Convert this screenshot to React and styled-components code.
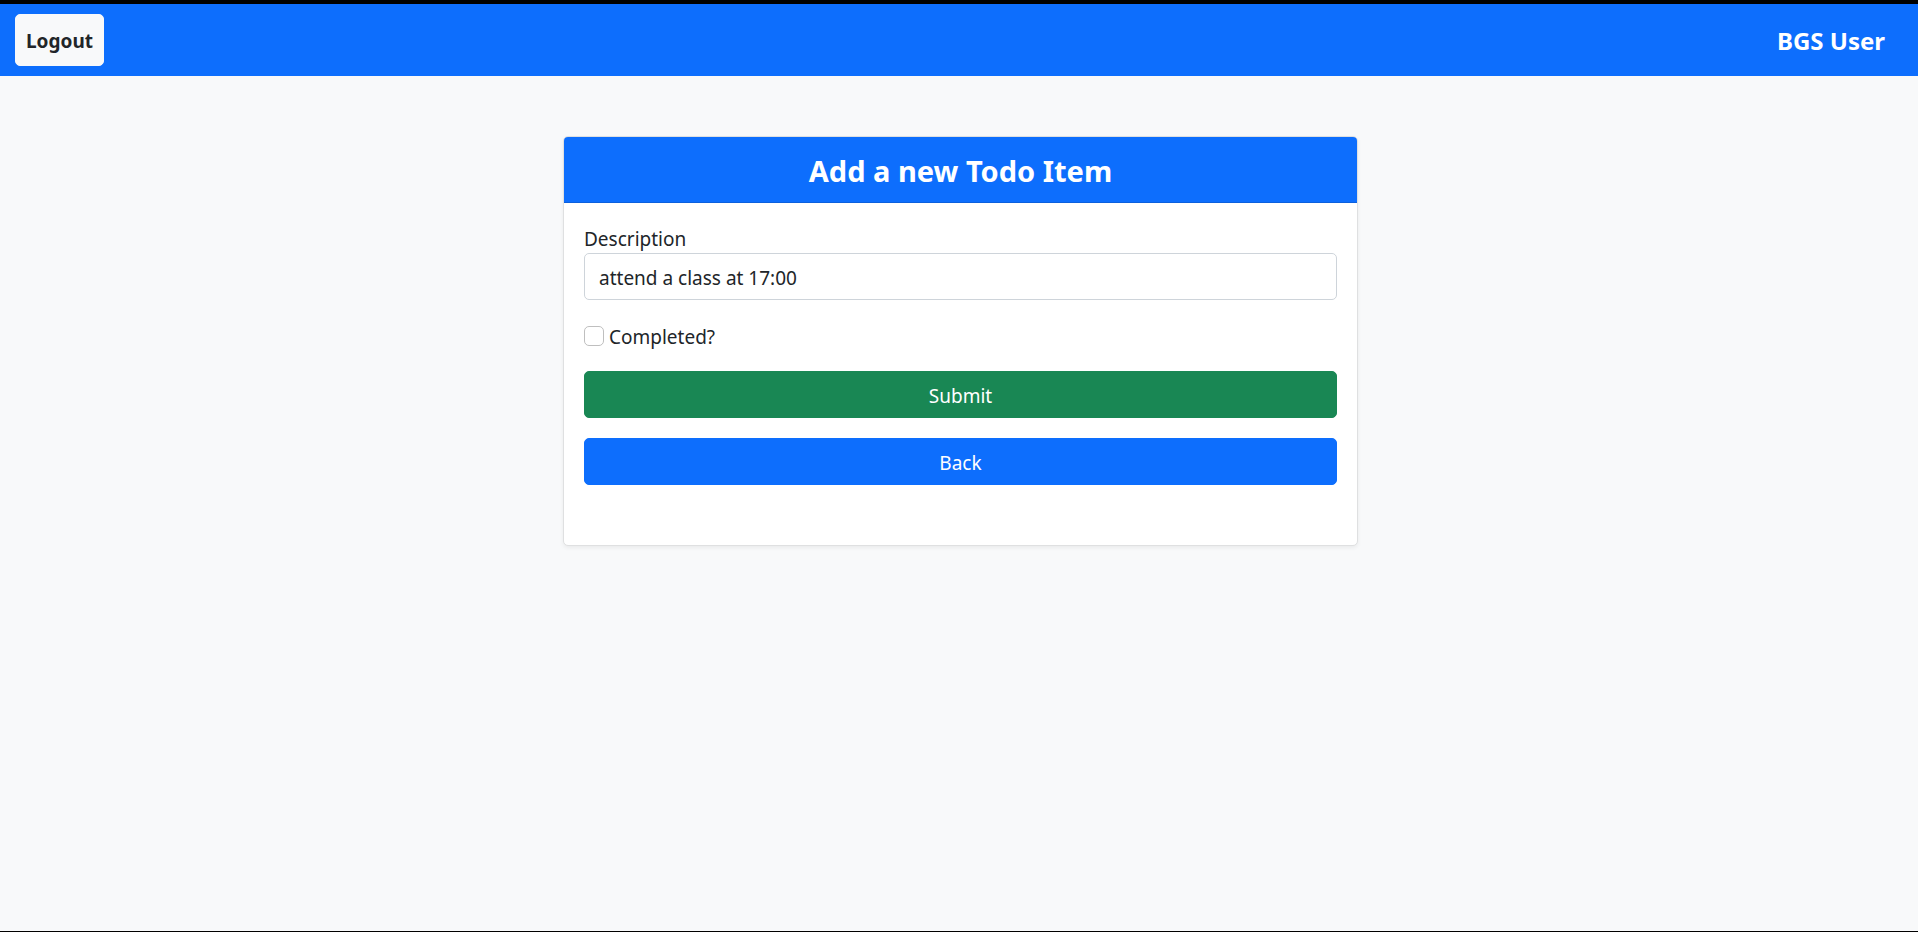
import React, { useState } from 'react';
import styled, { createGlobalStyle } from 'styled-components';

const GlobalStyle = createGlobalStyle`
  *, *::before, *::after { box-sizing: border-box; }
  body {
    margin: 0;
    background: #f8f9fa;
    color: #212529;
    font-family: "Segoe UI", "Noto Sans", "Liberation Sans", sans-serif;
    font-size: 19px;
    line-height: 30px;
  }
`;

const Page = styled.div`
  display: flex;
  flex-direction: column;
  min-height: 100vh;
  border-top: 4px solid #000;
  border-bottom: 1px solid #000;
`;

const Navbar = styled.header`
  display: flex;
  align-items: center;
  justify-content: space-between;
  padding: 10px 33px 10px 15px;
  background: #0d6efd;
`;

const LogoutButton = styled.button`
  padding: 12px 10px 10px;
  border: 1px solid #f8f9fa;
  border-radius: 5px;
  background: #f8f9fa;
  color: #212529;
  font: inherit;
  font-weight: 700;
  line-height: 28px;
  cursor: pointer;
`;

const UserName = styled.span`
  padding-top: 2px;
  color: #fff;
  font-size: 24px;
  font-weight: 700;
`;

const Main = styled.main`
  display: flex;
  justify-content: center;
  padding: 60px 12px 60px 15px;
`;

const Card = styled.section`
  width: 100%;
  max-width: 795px;
  border: 1px solid #dfe0e1;
  border-radius: 5px;
  background: #fff;
  box-shadow: 0 2px 4px rgba(0, 0, 0, 0.06);
  overflow: hidden;
`;

const CardTitle = styled.h1`
  margin: 0;
  padding: 14px 20px 11px;
  border-bottom: 1px solid #0c60dd;
  background: #0d6efd;
  color: #fff;
  font-size: 29px;
  font-weight: 700;
  line-height: 40px;
  text-align: center;
`;

const Form = styled.form`
  display: flex;
  flex-direction: column;
  gap: 20px;
  padding: 20px 20px 60px;
`;

const Field = styled.div`
  display: flex;
  flex-direction: column;
`;

const Label = styled.label`
  padding-top: 2px;
  line-height: 28px;
`;

const TextInput = styled.input`
  width: 100%;
  height: 47px;
  padding: 9px 14px 6px;
  border: 1px solid #ced4da;
  border-radius: 5px;
  background: #fff;
  color: #212529;
  font: inherit;
`;

const CheckRow = styled.div`
  display: flex;
  align-items: center;
  gap: 5px;
  min-height: 31px;
`;

const Checkbox = styled.input`
  appearance: none;
  width: 20px;
  height: 20px;
  margin: 0;
  border: 1px solid #bfbfbf;
  border-radius: 5px;
  background: #fff;

  &:checked {
    border-color: #0d6efd;
    background: #0d6efd;
  }
`;

const ActionButton = styled.button`
  width: 100%;
  height: 47px;
  padding: 9px 14px 6px;
  border: 1px solid ${(p) => p.$color};
  border-radius: 5px;
  background: ${(p) => p.$color};
  color: #fff;
  font: inherit;
  cursor: pointer;
`;

export default function App() {
  const [description, setDescription] = useState('attend a class at 17:00');
  const [completed, setCompleted] = useState(false);

  return (
    <>
      <GlobalStyle />
      <Page>
        <Navbar>
          <LogoutButton type="button">Logout</LogoutButton>
          <UserName>BGS User</UserName>
        </Navbar>
        <Main>
          <Card>
            <CardTitle>Add a new Todo Item</CardTitle>
            <Form onSubmit={(e) => e.preventDefault()}>
              <Field>
                <Label htmlFor="description">Description</Label>
                <TextInput
                  id="description"
                  type="text"
                  value={description}
                  onChange={(e) => setDescription(e.target.value)}
                />
              </Field>
              <CheckRow>
                <Checkbox
                  id="completed"
                  type="checkbox"
                  checked={completed}
                  onChange={(e) => setCompleted(e.target.checked)}
                />
                <Label htmlFor="completed">Completed?</Label>
              </CheckRow>
              <ActionButton type="submit" $color="#198754">Submit</ActionButton>
              <ActionButton type="button" $color="#0d6efd">Back</ActionButton>
            </Form>
          </Card>
        </Main>
      </Page>
    </>
  );
}
